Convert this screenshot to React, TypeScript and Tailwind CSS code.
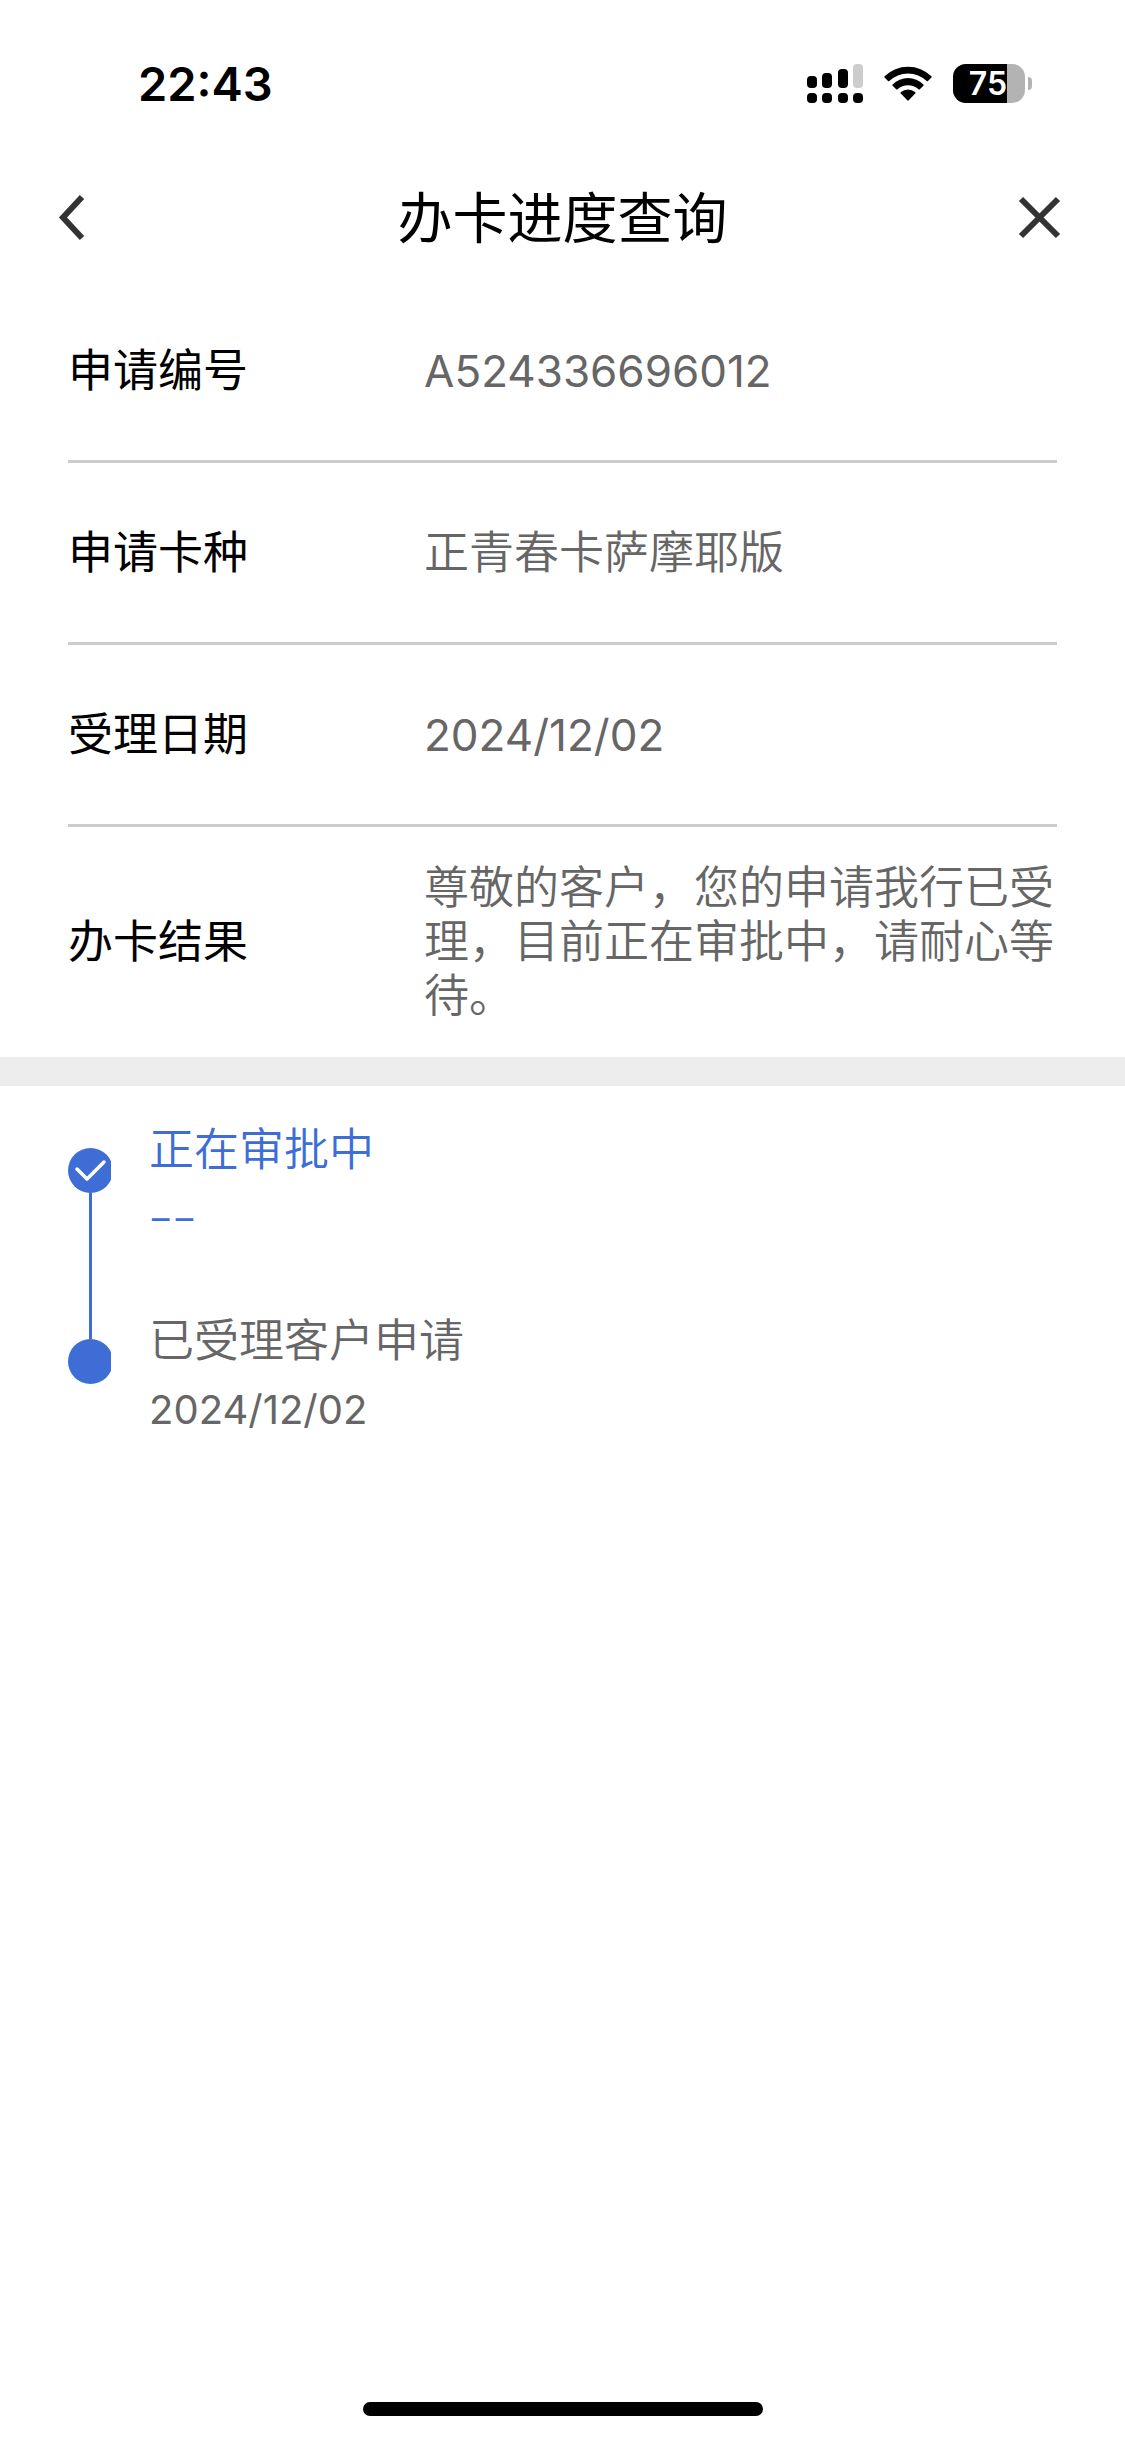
import type { ReactNode } from "react";

type Field = { label: string; value: string; numeric?: boolean };
type Step = { title: string; date?: string; active?: boolean };

const fields: Field[] = [
  { label: "申请编号", value: "A524336696012", numeric: true },
  { label: "申请卡种", value: "正青春卡萨摩耶版" },
  { label: "受理日期", value: "2024/12/02", numeric: true },
  {
    label: "办卡结果",
    value: "尊敬的客户，您的申请我行已受理，目前正在审批中，请耐心等待。",
  },
];

const steps: Step[] = [
  { title: "正在审批中", active: true },
  { title: "已受理客户申请", date: "2024/12/02" },
];

const SignalIcon = () => (
  <svg width="56" height="39" viewBox="0 0 56 39" aria-hidden="true">
    <rect x="0" y="12" width="10" height="12" rx="4" />
    <rect x="15" y="9" width="10" height="15" rx="4" />
    <rect x="31" y="5" width="10" height="19" rx="4" />
    <rect x="46" y="0" width="10" height="24" rx="4" fill="#cccccc" />
    <rect x="0" y="29" width="10" height="10" rx="4" />
    <rect x="15" y="29" width="10" height="10" rx="4" />
    <rect x="31" y="29" width="10" height="10" rx="4" />
    <rect x="46" y="29" width="10" height="10" rx="4" />
  </svg>
);

const WifiIcon = () => (
  <svg width="48" height="36" viewBox="0 0 48 36" aria-hidden="true">
    <path d="M0.6 10.2A33.5 33.5 0 0 1 47.4 10.2Q48 10.9 47.4 11.6L44 15Q43.4 15.6 42.7 15A27 27 0 0 0 5.3 15Q4.6 15.6 4 15L0.6 11.6Q0 10.9 0.6 10.2Z" />
    <path d="M8.6 18.4A22 22 0 0 1 39.4 18.4Q40 19.1 39.4 19.8L35.8 23.3Q35.2 23.9 34.5 23.3A15.5 15.5 0 0 0 13.5 23.3Q12.8 23.9 12.2 23.3L8.6 19.8Q8 19.1 8.6 18.4Z" />
    <path d="M16.8 27.4Q16.2 26.7 16.9 26A11 11 0 0 1 31.1 26Q31.8 26.7 31.2 27.4L24.7 34.3Q24 35 23.3 34.3Z" />
  </svg>
);

const Battery = () => (
  <div className="flex items-center gap-[3px]">
    <div className="flex h-[39px] w-[72px] items-center overflow-hidden rounded-[13px] bg-[#b3b3b3]">
      <div className="flex h-full w-3/4 items-center justify-end bg-black text-[32px] font-semibold text-white">
        75
      </div>
    </div>
    <div className="h-[13px] w-1 rounded-r-full bg-[#b3b3b3]" />
  </div>
);

const StatusBar = () => (
  <div className="flex items-center justify-between pt-16 pr-[93px] pb-16 pl-[138px]">
    <div className="text-[47px] leading-[39px] font-semibold">22:43</div>
    <div className="flex items-center gap-[21px]">
      <SignalIcon />
      <WifiIcon />
      <Battery />
    </div>
  </div>
);

const IconButton = ({ label, children }: { label: string; children: ReactNode }) => (
  <button type="button" aria-label={label} className="flex h-[60px] w-[60px] items-center justify-center">
    {children}
  </button>
);

const Header = () => (
  <header className="mb-3 flex h-[102px] items-center justify-between px-[48px]">
    <IconButton label="返回">
      <svg width="60" height="60" viewBox="0 0 60 60" fill="none" stroke="#333333" strokeWidth="6">
        <path d="M34 9L15 29.5L34 50" />
      </svg>
    </IconButton>
    <h1 className="text-[55px] leading-[60px]">办卡进度查询</h1>
    <IconButton label="关闭">
      <svg width="60" height="60" viewBox="0 0 60 60" fill="none" stroke="#333333" strokeWidth="6">
        <path d="M4 11L41 48M41 11L4 48" />
      </svg>
    </IconButton>
  </header>
);

const StepDot = ({ checked }: { checked?: boolean }) => (
  <svg width="43" height="45" viewBox="0 0 43 45" fill="none" className="shrink-0">
    <circle cx="22.5" cy="22.5" r="22.5" fill="#3d6dd5" />
    {checked && (
      <path d="M9 21L19 31L36 14" stroke="white" strokeWidth="3.5" strokeLinecap="round" strokeLinejoin="round" />
    )}
  </svg>
);

export default function App() {
  return (
    <div
      lang="zh-CN"
      className="flex min-h-screen flex-col bg-white font-[Inter,'Noto_Sans_CJK_SC',sans-serif] text-black"
    >
      <StatusBar />
      <Header />

      <main className="flex-1">
        <dl className="px-[68px] text-[45px] leading-[54px]">
          {fields.map((field) => (
            <div
              key={field.label}
              className="flex min-h-[182px] items-center border-b-[3px] border-[#cccccc] py-[34px] last:border-b-0"
            >
              <dt className="w-[36%] shrink-0">{field.label}</dt>
              <dd
                className={
                  field.numeric ? "flex-1 text-[44px] text-[#666666]" : "flex-1 font-[350] text-[#666666]"
                }
              >
                {field.value}
              </dd>
            </div>
          ))}
        </dl>

        <div className="h-[29px] bg-[#ededed]" />

        <ol className="px-[68px] pt-[35px]">
          {steps.map((step, index) => (
            <li
              key={step.title}
              className={step.active ? "flex gap-[36px] text-[#3d6dd5]" : "flex gap-[36px] text-[#666666]"}
            >
              <div className="-mb-[27px] flex w-[45px] flex-col pt-[27px]">
                <StepDot checked={step.active} />
                {index < steps.length - 1 && <div className="ml-[21px] w-[3px] flex-1 bg-[#3d6dd5]" />}
              </div>
              <div className="pt-[2px] pb-16">
                <p className="text-[45px] leading-[54px] font-[350]">{step.title}</p>
                <p className="mt-[15px] text-[40px] leading-[54px]">
                  {step.date ?? <span className="font-[Roboto] text-[36px]">––</span>}
                </p>
              </div>
            </li>
          ))}
        </ol>
      </main>

      <div className="mx-auto mb-[23px] h-[14px] w-[400px] rounded-full bg-black" />
    </div>
  );
}
